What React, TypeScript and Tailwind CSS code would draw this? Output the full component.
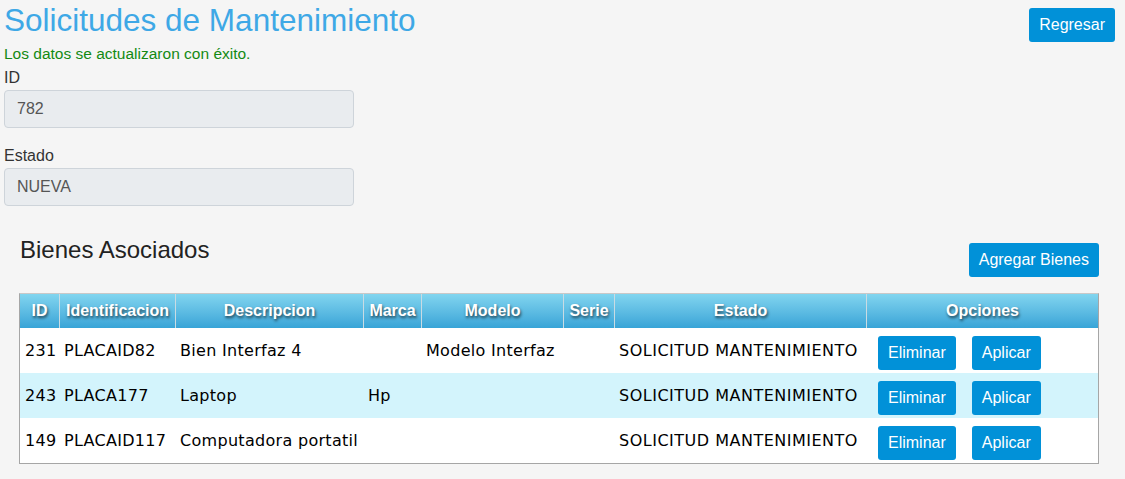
import React from 'react'

type Bien = {
  id: string
  placa: string
  descripcion: string
  marca: string
  modelo: string
  serie: string
  estado: string
}

const bienes: Bien[] = [
  { id: '231', placa: 'PLACAID82', descripcion: 'Bien Interfaz 4', marca: '', modelo: 'Modelo Interfaz', serie: '', estado: 'SOLICITUD MANTENIMIENTO' },
  { id: '243', placa: 'PLACA177', descripcion: 'Laptop', marca: 'Hp', modelo: '', serie: '', estado: 'SOLICITUD MANTENIMIENTO' },
  { id: '149', placa: 'PLACAID117', descripcion: 'Computadora portatil', marca: '', modelo: '', serie: '', estado: 'SOLICITUD MANTENIMIENTO' },
]

const columns = [
  { label: 'ID', w: 'w-[39px]' },
  { label: 'Identificacion', w: 'w-[116px]' },
  { label: 'Descripcion', w: 'w-[188px]' },
  { label: 'Marca', w: 'w-[58px]' },
  { label: 'Modelo', w: 'w-[142px]' },
  { label: 'Serie', w: 'w-[51px]' },
  { label: 'Estado', w: 'w-[252px]' },
  { label: 'Opciones', w: 'w-[232px]' },
]

function BlueButton({ children }: { children: React.ReactNode }) {
  return (
    <button className="h-[34px] px-[10px] rounded-[3px] bg-[#0191d8] text-white text-[16px] leading-none font-['Liberation_Sans',Arial,sans-serif]">
      {children}
    </button>
  )
}

function ReadOnlyField({ label, value, first }: { label: string; value: string; first?: boolean }) {
  return (
    <div className={first ? 'mt-[4px]' : 'mt-[18px]'}>
      <div className="h-[20px] leading-[20px] text-[16px] text-[#333]">{label}</div>
      <div className="mt-[2px] w-[350px] h-[38px] rounded-[4px] border border-[#ced4da] bg-[#e9ecef] pl-[12px] flex items-center text-[16px] text-[#555]">
        {value}
      </div>
    </div>
  )
}

export default function App() {
  return (
    <div className="min-h-screen bg-[#f5f5f5] font-['Liberation_Sans',Arial,sans-serif] pl-[4px] pr-[10px]">
      <div className="flex justify-between items-start">
        <h1 className="h-[40px] leading-[40px] text-[31.5px] text-[#3ea8e6] font-normal">
          Solicitudes de Mantenimiento
        </h1>
        <div className="mt-[8px]">
          <BlueButton>Regresar</BlueButton>
        </div>
      </div>

      <p className="mt-[2px] h-[20px] leading-[20px] text-[15.5px] text-[#138a13]">
        Los datos se actualizaron con éxito.
      </p>

      <ReadOnlyField label="ID" value="782" first />
      <ReadOnlyField label="Estado" value="NUEVA" />

      <div className="mt-[30px] ml-[15px] w-[1080px]">
        <div className="flex justify-between items-start">
          <h3 className="pl-[1px] h-[28px] leading-[28px] text-[24px] text-[#222]">Bienes Asociados</h3>
          <div className="mt-[7px]">
            <BlueButton>Agregar Bienes</BlueButton>
          </div>
        </div>

        <div className="mt-[16px] border border-[#a6a6a6] border-t-[#c8c8c8] bg-white">
          <table className="w-full table-fixed border-separate border-spacing-0">
            <thead>
              <tr>
                {columns.map((c, i) => (
                  <th
                    key={c.label}
                    className={`${c.w} h-[34px] p-0 text-center align-middle bg-linear-to-b from-[#81d5ef] to-[#37a4d7] text-white text-[16px] font-bold [text-shadow:1px_2px_3px_rgba(0,0,0,0.65)] ${
                      i > 0 ? 'border-l border-[#c9dbe3]' : ''
                    }`}
                  >
                    {c.label}
                  </th>
                ))}
              </tr>
            </thead>
            <tbody className="font-['DejaVu_Sans',Verdana,sans-serif] text-[16px] tracking-[0.3px] text-black">
              {bienes.map((b, r) => (
                <tr key={b.id} className={r === 1 ? 'bg-[#d3f4fc]' : 'bg-white'}>
                  <td className="h-[45px] px-[5px] align-middle whitespace-nowrap overflow-hidden">{b.id}</td>
                  <td className="px-[5px] align-middle whitespace-nowrap overflow-hidden">{b.placa}</td>
                  <td className="px-[5px] align-middle whitespace-nowrap overflow-hidden">{b.descripcion}</td>
                  <td className="px-[5px] align-middle whitespace-nowrap overflow-hidden">{b.marca}</td>
                  <td className="px-[5px] align-middle whitespace-nowrap overflow-hidden">{b.modelo}</td>
                  <td className="px-[5px] align-middle whitespace-nowrap overflow-hidden">{b.serie}</td>
                  <td className="px-[5px] align-middle whitespace-nowrap overflow-hidden tracking-[0.5px]">{b.estado}</td>
                  <td className="pl-[12px] pt-[8px] align-top tracking-normal">
                    <div className="flex gap-[16px]">
                      <BlueButton>Eliminar</BlueButton>
                      <BlueButton>Aplicar</BlueButton>
                    </div>
                  </td>
                </tr>
              ))}
            </tbody>
          </table>
        </div>
      </div>
    </div>
  )
}
